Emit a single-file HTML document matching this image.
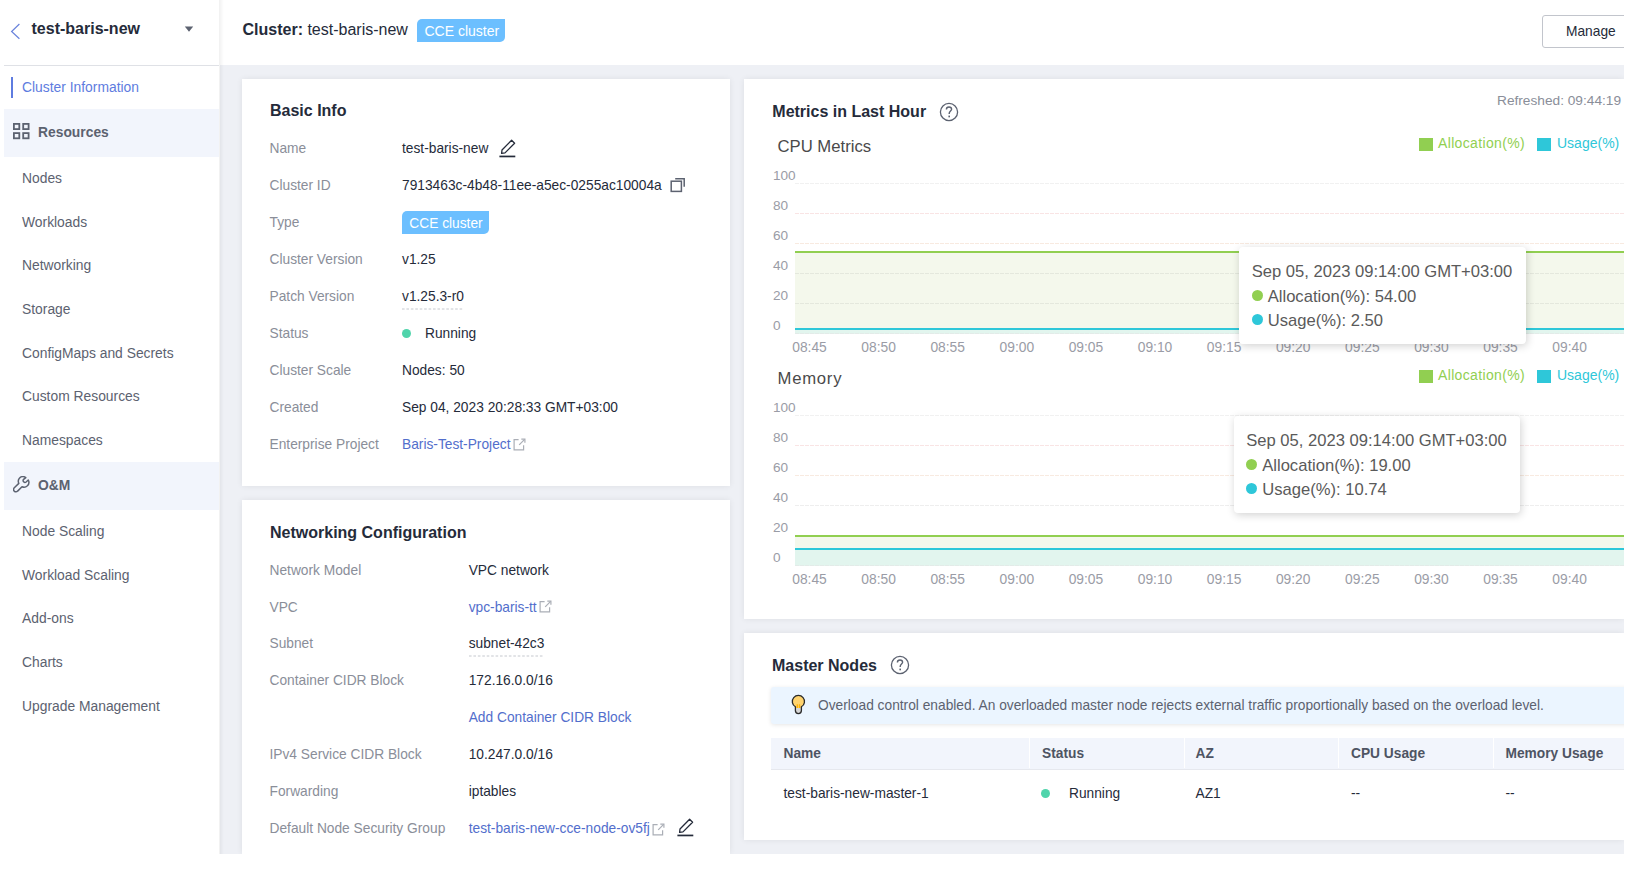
<!DOCTYPE html>
<html><head><meta charset="utf-8"><title>Cluster Information</title>
<style>
html,body{margin:0;padding:0;background:#fff;}
body{width:1640px;height:869px;position:relative;overflow:hidden;font-family:"Liberation Sans",sans-serif;}
.t{position:absolute;white-space:nowrap;line-height:20px;}
.r{position:absolute;}
#clip{position:absolute;left:0;top:0;width:1624px;height:854px;overflow:hidden;}
</style></head><body><div id="clip">
<div class="r" style="left:220px;top:65px;width:1404px;height:789px;background:#eef0f5"></div>
<div class="r" style="left:219px;top:0px;width:5px;height:854px;background:linear-gradient(to right, rgba(0,0,0,0.06), rgba(0,0,0,0))"></div>
<svg class="r" style="left:10px;top:22px;" width="12" height="18" viewBox="0 0 12 18"><path d="M9.4 2 L1.6 9.5 L9.4 16.8" fill="none" stroke="#6b84dc" stroke-width="1.2"/></svg>
<div class="t " style="left:31.50px;top:18.75px;font-size:16px;color:#252b3a;font-weight:700;">test-baris-new</div>
<svg class="r" style="left:184.2px;top:25.5px;" width="10" height="6" viewBox="0 0 10 6"><path d="M0.8 0.5 L9.2 0.5 L5 5.8 Z" fill="#5c6270"/></svg>
<div class="r" style="left:4px;top:65px;width:215px;height:1px;background:#dfe1e6"></div>
<div class="r" style="left:11px;top:77px;width:2px;height:21px;background:#5e7ce0"></div>
<div class="t " style="left:22.00px;top:77.10px;font-size:13.85px;color:#5e7ce0;">Cluster Information</div>
<div class="r" style="left:4px;top:109px;width:215px;height:48px;background:#f2f5fc"></div>
<svg class="r" style="left:12px;top:122px;" width="19" height="18" viewBox="0 0 19 18"><g fill="none" stroke="#5c6270" stroke-width="1.8"><rect x="1.9" y="1.9" width="5.4" height="5.2"/><rect x="11.2" y="1.9" width="5.4" height="5.2"/><rect x="1.9" y="11.1" width="5.4" height="5.2"/><rect x="11.2" y="11.1" width="5.4" height="5.2"/></g></svg>
<div class="t " style="left:38.00px;top:121.60px;font-size:13.85px;color:#5c6270;font-weight:700;">Resources</div>
<div class="t " style="left:22.00px;top:168.20px;font-size:13.85px;color:#5c6270;">Nodes</div>
<div class="t " style="left:22.00px;top:211.82px;font-size:13.85px;color:#5c6270;">Workloads</div>
<div class="t " style="left:22.00px;top:255.44px;font-size:13.85px;color:#5c6270;">Networking</div>
<div class="t " style="left:22.00px;top:299.06px;font-size:13.85px;color:#5c6270;">Storage</div>
<div class="t " style="left:22.00px;top:342.68px;font-size:13.85px;color:#5c6270;">ConfigMaps and Secrets</div>
<div class="t " style="left:22.00px;top:386.30px;font-size:13.85px;color:#5c6270;">Custom Resources</div>
<div class="t " style="left:22.00px;top:429.92px;font-size:13.85px;color:#5c6270;">Namespaces</div>
<div class="r" style="left:4px;top:462px;width:215px;height:48px;background:#f2f5fc"></div>
<svg class="r" style="left:13px;top:475.5px;" width="17" height="17" viewBox="0 0 17 17"><path d="M12.8 1.6 C11.2 0.2 8.2 0.2 6.6 2 C5.2 3.5 5 5.6 5.8 7.4 L1.3 11.8 C0.3 12.8 0.3 14.3 1.3 15.2 C2.2 16.1 3.7 16.1 4.6 15.1 L9 10.7 C10.8 11.5 12.9 11.2 14.4 9.8 C15.9 8.3 16.3 6 15.3 4 L13.1 6 C12.4 6.6 11.3 6.5 10.6 5.8 C9.9 5.1 9.9 4 10.6 3.4 Z" fill="none" stroke="#5c6270" stroke-width="1.5" stroke-linejoin="round"/></svg>
<div class="t " style="left:38.00px;top:474.50px;font-size:13.85px;color:#5c6270;font-weight:700;">O&amp;M</div>
<div class="t " style="left:22.00px;top:521.20px;font-size:13.85px;color:#5c6270;">Node Scaling</div>
<div class="t " style="left:22.00px;top:564.82px;font-size:13.85px;color:#5c6270;">Workload Scaling</div>
<div class="t " style="left:22.00px;top:608.44px;font-size:13.85px;color:#5c6270;">Add-ons</div>
<div class="t " style="left:22.00px;top:652.06px;font-size:13.85px;color:#5c6270;">Charts</div>
<div class="t " style="left:22.00px;top:695.68px;font-size:13.85px;color:#5c6270;">Upgrade Management</div>
<div class="t " style="left:242.50px;top:20.45px;font-size:16px;color:#252b3a;"><b>Cluster:</b> test-baris-new</div>
<div class="r" style="left:417px;top:19px;width:88px;height:23px;background:#6cbfff;border-radius:5px 0 5px 0"></div>
<div class="t " style="left:424.50px;top:21.15px;font-size:14px;color:#fff;">CCE cluster</div>
<div class="r" style="left:1542px;top:15px;width:110px;height:33px;box-sizing:border-box;border:1.5px solid #c2c5cc;border-radius:3px;background:#fff"></div>
<div class="t " style="left:1566.00px;top:22.13px;font-size:13.75px;color:#252b3a;">Manage</div>
<div class="r" style="left:242px;top:79px;width:488px;height:407px;background:#fff;box-shadow:0 0 6px rgba(0,0,0,0.075)"></div>
<div class="t " style="left:270.00px;top:101.35px;font-size:16px;color:#252b3a;font-weight:700;">Basic Info</div>
<div class="t " style="left:269.50px;top:138.63px;font-size:13.75px;color:#8a8e99;">Name</div>
<div class="t " style="left:269.50px;top:175.63px;font-size:13.75px;color:#8a8e99;">Cluster ID</div>
<div class="t " style="left:269.50px;top:212.63px;font-size:13.75px;color:#8a8e99;">Type</div>
<div class="t " style="left:269.50px;top:249.63px;font-size:13.75px;color:#8a8e99;">Cluster Version</div>
<div class="t " style="left:269.50px;top:286.63px;font-size:13.75px;color:#8a8e99;">Patch Version</div>
<div class="t " style="left:269.50px;top:323.63px;font-size:13.75px;color:#8a8e99;">Status</div>
<div class="t " style="left:269.50px;top:360.63px;font-size:13.75px;color:#8a8e99;">Cluster Scale</div>
<div class="t " style="left:269.50px;top:397.63px;font-size:13.75px;color:#8a8e99;">Created</div>
<div class="t " style="left:269.50px;top:434.63px;font-size:13.75px;color:#8a8e99;">Enterprise Project</div>
<div class="t " style="left:402.00px;top:138.63px;font-size:13.75px;color:#252b3a;">test-baris-new</div>
<svg class="r" style="left:498.5px;top:138.5px;" width="17" height="19" viewBox="0 0 17 19"><path d="M2.6 14.4 L3.0 11.0 L12.6 1.3 L15.6 4.3 L6.0 13.9 Z" fill="none" stroke="#252b3a" stroke-width="1.3" stroke-linejoin="round"/><rect x="0.4" y="16.6" width="15.9" height="1.7" fill="#252b3a"/></svg>
<div class="t " style="left:402.00px;top:175.63px;font-size:13.75px;color:#252b3a;">7913463c-4b48-11ee-a5ec-0255ac10004a</div>
<svg class="r" style="left:670px;top:177px;" width="16" height="16" viewBox="0 0 16 16"><g fill="none" stroke="#5c6270" stroke-width="1.5"><rect x="1.2" y="4.2" width="10.2" height="10.2"/><path d="M5.2 1.7 H14.2 V9.8"/></g></svg>
<div class="r" style="left:402px;top:211px;width:87px;height:23px;background:#6cbfff;border-radius:5px 0 5px 0"></div>
<div class="t " style="left:409.30px;top:213.53px;font-size:13.75px;color:#fff;">CCE cluster</div>
<div class="t " style="left:402.00px;top:249.63px;font-size:13.75px;color:#252b3a;">v1.25</div>
<div class="t " style="left:402.00px;top:286.83px;font-size:13.75px;color:#252b3a;">v1.25.3-r0</div>
<svg class="r" style="left:402px;top:307.5px;" width="62" height="2" viewBox="0 0 62 2"><line x1="0" y1="1" x2="62" y2="1" stroke="#c5c8ce" stroke-width="1" stroke-dasharray="2.6 1.83"/></svg>
<div class="r" style="left:401.8px;top:328.8px;width:9.4px;height:9.4px;background:#50d4ab;border-radius:50%"></div>
<div class="t " style="left:425.00px;top:324.13px;font-size:13.75px;color:#252b3a;">Running</div>
<div class="t " style="left:402.00px;top:360.63px;font-size:13.75px;color:#252b3a;">Nodes: 50</div>
<div class="t " style="left:402.00px;top:397.83px;font-size:13.75px;color:#252b3a;">Sep 04, 2023 20:28:33 GMT+03:00</div>
<div class="t " style="left:402.00px;top:434.73px;font-size:13.75px;color:#526ecc;">Baris-Test-Project</div>
<svg class="r" style="left:513px;top:438px;" width="13" height="13" viewBox="0 0 13 13"><g fill="none" stroke="#aaaeb6" stroke-width="1.2"><path d="M5.6 1.6 H1.1 V11.9 H10.6 V7.2"/><path d="M6.2 6.8 L11.6 1.4"/><path d="M8.3 1.1 H11.9 V4.7"/></g></svg>
<div class="r" style="left:242px;top:500px;width:488px;height:354px;background:#fff;box-shadow:0 0 6px rgba(0,0,0,0.075)"></div>
<div class="t " style="left:270.00px;top:523.25px;font-size:16px;color:#252b3a;font-weight:700;">Networking Configuration</div>
<div class="t " style="left:269.50px;top:560.63px;font-size:13.75px;color:#8a8e99;">Network Model</div>
<div class="t " style="left:269.50px;top:597.53px;font-size:13.75px;color:#8a8e99;">VPC</div>
<div class="t " style="left:269.50px;top:634.43px;font-size:13.75px;color:#8a8e99;">Subnet</div>
<div class="t " style="left:269.50px;top:671.33px;font-size:13.75px;color:#8a8e99;">Container CIDR Block</div>
<div class="t " style="left:269.50px;top:745.13px;font-size:13.75px;color:#8a8e99;">IPv4 Service CIDR Block</div>
<div class="t " style="left:269.50px;top:782.03px;font-size:13.75px;color:#8a8e99;">Forwarding</div>
<div class="t " style="left:269.50px;top:818.93px;font-size:13.75px;color:#8a8e99;">Default Node Security Group</div>
<div class="t " style="left:468.70px;top:560.63px;font-size:13.75px;color:#252b3a;">VPC network</div>
<div class="t " style="left:468.70px;top:597.53px;font-size:13.75px;color:#526ecc;">vpc-baris-tt</div>
<svg class="r" style="left:538.5px;top:600px;" width="13" height="13" viewBox="0 0 13 13"><g fill="none" stroke="#aaaeb6" stroke-width="1.2"><path d="M5.6 1.6 H1.1 V11.9 H10.6 V7.2"/><path d="M6.2 6.8 L11.6 1.4"/><path d="M8.3 1.1 H11.9 V4.7"/></g></svg>
<div class="t " style="left:468.70px;top:634.43px;font-size:13.75px;color:#252b3a;">subnet-42c3</div>
<svg class="r" style="left:469px;top:654.5px;" width="75" height="2" viewBox="0 0 75 2"><line x1="0" y1="1" x2="75" y2="1" stroke="#c5c8ce" stroke-width="1" stroke-dasharray="2.6 1.83"/></svg>
<div class="t " style="left:468.70px;top:671.33px;font-size:13.75px;color:#252b3a;">172.16.0.0/16</div>
<div class="t " style="left:468.70px;top:708.23px;font-size:13.75px;color:#526ecc;">Add Container CIDR Block</div>
<div class="t " style="left:468.70px;top:745.13px;font-size:13.75px;color:#252b3a;">10.247.0.0/16</div>
<div class="t " style="left:468.70px;top:782.03px;font-size:13.75px;color:#252b3a;">iptables</div>
<div class="t " style="left:468.70px;top:819.33px;font-size:13.75px;color:#526ecc;">test-baris-new-cce-node-ov5fj</div>
<svg class="r" style="left:651.5px;top:822.5px;" width="13" height="13" viewBox="0 0 13 13"><g fill="none" stroke="#aaaeb6" stroke-width="1.2"><path d="M5.6 1.6 H1.1 V11.9 H10.6 V7.2"/><path d="M6.2 6.8 L11.6 1.4"/><path d="M8.3 1.1 H11.9 V4.7"/></g></svg>
<svg class="r" style="left:676.5px;top:818px;" width="17" height="19" viewBox="0 0 17 19"><path d="M2.6 14.4 L3.0 11.0 L12.6 1.3 L15.6 4.3 L6.0 13.9 Z" fill="none" stroke="#252b3a" stroke-width="1.3" stroke-linejoin="round"/><rect x="0.4" y="16.6" width="15.9" height="1.7" fill="#252b3a"/></svg>
<div class="r" style="left:744px;top:79px;width:880px;height:540px;background:#fff;box-shadow:0 0 6px rgba(0,0,0,0.075)"></div>
<div class="t " style="left:772.30px;top:101.65px;font-size:16px;color:#252b3a;font-weight:700;">Metrics in Last Hour</div>
<svg class="r" style="left:939px;top:102px;" width="20" height="20" viewBox="0 0 20 20"><circle cx="10" cy="10" r="8.6" fill="none" stroke="#5c6270" stroke-width="1.3"/><path d="M7.4 7.6 C7.4 5.9 8.6 5 10 5 C11.5 5 12.6 6 12.6 7.3 C12.6 8.9 10.2 9.3 10.2 11.4 V12" fill="none" stroke="#5c6270" stroke-width="1.4"/><rect x="9.4" y="13.6" width="1.6" height="1.7" fill="#5c6270"/></svg>
<div class="t " style="left:1497.00px;top:91.45px;font-size:13.7px;color:#8a8e99;">Refreshed: 09:44:19</div>
<div class="t " style="left:777.50px;top:136.91px;font-size:16.7px;color:#4a4a4a;">CPU Metrics</div>
<div class="r" style="left:1418.5px;top:137.5px;width:14px;height:13.5px;background:#91cf51"></div>
<div class="t " style="left:1438.00px;top:133.15px;font-size:14px;color:#91cf51;letter-spacing:0.35px">Allocation(%)</div>
<div class="r" style="left:1537px;top:137.5px;width:14px;height:13.5px;background:#2ec7d9"></div>
<div class="t " style="left:1557.00px;top:133.15px;font-size:14px;color:#2ec7d9;">Usage(%)</div>
<div class="t " style="left:773.00px;top:165.78px;font-size:13.6px;color:#9a9ca6;">100</div>
<div class="t " style="left:773.00px;top:195.78px;font-size:13.6px;color:#9a9ca6;">80</div>
<div class="t " style="left:773.00px;top:225.78px;font-size:13.6px;color:#9a9ca6;">60</div>
<div class="t " style="left:773.00px;top:255.78px;font-size:13.6px;color:#9a9ca6;">40</div>
<div class="t " style="left:773.00px;top:285.78px;font-size:13.6px;color:#9a9ca6;">20</div>
<div class="t " style="left:773.00px;top:315.78px;font-size:13.6px;color:#9a9ca6;">0</div>
<div class="r" style="left:795px;top:251.1px;width:829px;height:82.9px;background:#f4f8ec"></div>
<div class="r" style="left:795px;top:327.8px;width:829px;height:6.199999999999989px;background:#e2f5ee"></div>
<div class="r" style="left:795px;top:183px;width:829px;height:1px;background:repeating-linear-gradient(to right,#f1f1f1 0 4px,transparent 4px 5px)"></div>
<div class="r" style="left:795px;top:213px;width:829px;height:1px;background:repeating-linear-gradient(to right,#f9e4e4 0 4px,transparent 4px 5px)"></div>
<div class="r" style="left:795px;top:243px;width:829px;height:1px;background:repeating-linear-gradient(to right,#f8eae0 0 4px,transparent 4px 5px)"></div>
<div class="r" style="left:795px;top:273px;width:829px;height:1px;background:repeating-linear-gradient(to right,#e4e8dd 0 4px,transparent 4px 5px)"></div>
<div class="r" style="left:795px;top:303px;width:829px;height:1px;background:repeating-linear-gradient(to right,#e4e8dd 0 4px,transparent 4px 5px)"></div>
<div class="r" style="left:795px;top:333px;width:829px;height:1px;background:repeating-linear-gradient(to right,#e3ebe8 0 4px,transparent 4px 5px)"></div>
<div class="r" style="left:795px;top:251.1px;width:829px;height:2.1px;background:#91cf51"></div>
<div class="r" style="left:795px;top:327.8px;width:829px;height:2.1px;background:#2ec7d9"></div>
<div class="t " style="left:792.00px;top:337.62px;font-size:13.8px;color:#9a9ca6;width:35px;text-align:center">08:45</div>
<div class="t " style="left:861.10px;top:337.62px;font-size:13.8px;color:#9a9ca6;width:35px;text-align:center">08:50</div>
<div class="t " style="left:930.20px;top:337.62px;font-size:13.8px;color:#9a9ca6;width:35px;text-align:center">08:55</div>
<div class="t " style="left:999.30px;top:337.62px;font-size:13.8px;color:#9a9ca6;width:35px;text-align:center">09:00</div>
<div class="t " style="left:1068.40px;top:337.62px;font-size:13.8px;color:#9a9ca6;width:35px;text-align:center">09:05</div>
<div class="t " style="left:1137.50px;top:337.62px;font-size:13.8px;color:#9a9ca6;width:35px;text-align:center">09:10</div>
<div class="t " style="left:1206.60px;top:337.62px;font-size:13.8px;color:#9a9ca6;width:35px;text-align:center">09:15</div>
<div class="t " style="left:1275.70px;top:337.62px;font-size:13.8px;color:#9a9ca6;width:35px;text-align:center">09:20</div>
<div class="t " style="left:1344.80px;top:337.62px;font-size:13.8px;color:#9a9ca6;width:35px;text-align:center">09:25</div>
<div class="t " style="left:1413.90px;top:337.62px;font-size:13.8px;color:#9a9ca6;width:35px;text-align:center">09:30</div>
<div class="t " style="left:1483.00px;top:337.62px;font-size:13.8px;color:#9a9ca6;width:35px;text-align:center">09:35</div>
<div class="t " style="left:1552.10px;top:337.62px;font-size:13.8px;color:#9a9ca6;width:35px;text-align:center">09:40</div>
<div class="t " style="left:777.50px;top:368.91px;font-size:16.7px;color:#4a4a4a;letter-spacing:0.75px">Memory</div>
<div class="r" style="left:1418.5px;top:369.5px;width:14px;height:13.5px;background:#91cf51"></div>
<div class="t " style="left:1438.00px;top:365.15px;font-size:14px;color:#91cf51;letter-spacing:0.35px">Allocation(%)</div>
<div class="r" style="left:1537px;top:369.5px;width:14px;height:13.5px;background:#2ec7d9"></div>
<div class="t " style="left:1557.00px;top:365.15px;font-size:14px;color:#2ec7d9;">Usage(%)</div>
<div class="t " style="left:773.00px;top:397.78px;font-size:13.6px;color:#9a9ca6;">100</div>
<div class="t " style="left:773.00px;top:427.78px;font-size:13.6px;color:#9a9ca6;">80</div>
<div class="t " style="left:773.00px;top:457.78px;font-size:13.6px;color:#9a9ca6;">60</div>
<div class="t " style="left:773.00px;top:487.78px;font-size:13.6px;color:#9a9ca6;">40</div>
<div class="t " style="left:773.00px;top:517.78px;font-size:13.6px;color:#9a9ca6;">20</div>
<div class="t " style="left:773.00px;top:547.78px;font-size:13.6px;color:#9a9ca6;">0</div>
<div class="r" style="left:795px;top:535.2px;width:829px;height:30.799999999999955px;background:#f4f8ec"></div>
<div class="r" style="left:795px;top:547.7px;width:829px;height:18.299999999999955px;background:#e2f5ee"></div>
<div class="r" style="left:795px;top:415px;width:829px;height:1px;background:repeating-linear-gradient(to right,#f1f1f1 0 4px,transparent 4px 5px)"></div>
<div class="r" style="left:795px;top:445px;width:829px;height:1px;background:repeating-linear-gradient(to right,#f9e4e4 0 4px,transparent 4px 5px)"></div>
<div class="r" style="left:795px;top:475px;width:829px;height:1px;background:repeating-linear-gradient(to right,#f8eae0 0 4px,transparent 4px 5px)"></div>
<div class="r" style="left:795px;top:505px;width:829px;height:1px;background:repeating-linear-gradient(to right,#eeeeee 0 4px,transparent 4px 5px)"></div>
<div class="r" style="left:795px;top:535px;width:829px;height:1px;background:repeating-linear-gradient(to right,#eeeeee 0 4px,transparent 4px 5px)"></div>
<div class="r" style="left:795px;top:565px;width:829px;height:1px;background:repeating-linear-gradient(to right,#e3ebe8 0 4px,transparent 4px 5px)"></div>
<div class="r" style="left:795px;top:535.2px;width:829px;height:2.1px;background:#91cf51"></div>
<div class="r" style="left:795px;top:547.7px;width:829px;height:2.1px;background:#2ec7d9"></div>
<div class="t " style="left:792.00px;top:569.62px;font-size:13.8px;color:#9a9ca6;width:35px;text-align:center">08:45</div>
<div class="t " style="left:861.10px;top:569.62px;font-size:13.8px;color:#9a9ca6;width:35px;text-align:center">08:50</div>
<div class="t " style="left:930.20px;top:569.62px;font-size:13.8px;color:#9a9ca6;width:35px;text-align:center">08:55</div>
<div class="t " style="left:999.30px;top:569.62px;font-size:13.8px;color:#9a9ca6;width:35px;text-align:center">09:00</div>
<div class="t " style="left:1068.40px;top:569.62px;font-size:13.8px;color:#9a9ca6;width:35px;text-align:center">09:05</div>
<div class="t " style="left:1137.50px;top:569.62px;font-size:13.8px;color:#9a9ca6;width:35px;text-align:center">09:10</div>
<div class="t " style="left:1206.60px;top:569.62px;font-size:13.8px;color:#9a9ca6;width:35px;text-align:center">09:15</div>
<div class="t " style="left:1275.70px;top:569.62px;font-size:13.8px;color:#9a9ca6;width:35px;text-align:center">09:20</div>
<div class="t " style="left:1344.80px;top:569.62px;font-size:13.8px;color:#9a9ca6;width:35px;text-align:center">09:25</div>
<div class="t " style="left:1413.90px;top:569.62px;font-size:13.8px;color:#9a9ca6;width:35px;text-align:center">09:30</div>
<div class="t " style="left:1483.00px;top:569.62px;font-size:13.8px;color:#9a9ca6;width:35px;text-align:center">09:35</div>
<div class="t " style="left:1552.10px;top:569.62px;font-size:13.8px;color:#9a9ca6;width:35px;text-align:center">09:40</div>
<div class="r" style="left:1239px;top:247px;width:286.5px;height:96.5px;background:#fff;border-radius:4px;box-shadow:1px 2px 9px rgba(0,0,0,0.18)"></div>
<div class="t " style="left:1251.70px;top:262.44px;font-size:16.6px;color:#5a5a5a;">Sep 05, 2023 09:14:00 GMT+03:00</div>
<div class="r" style="left:1251.7px;top:290.2px;width:11px;height:11px;background:#91cf51;border-radius:50%"></div>
<div class="t " style="left:1267.70px;top:286.84px;font-size:16.6px;color:#5a5a5a;">Allocation(%): 54.00</div>
<div class="r" style="left:1251.7px;top:314.3px;width:11px;height:11px;background:#2ec7d9;border-radius:50%"></div>
<div class="t " style="left:1267.70px;top:310.54px;font-size:16.6px;color:#5a5a5a;">Usage(%): 2.50</div>
<div class="r" style="left:1233.5px;top:416px;width:286.5px;height:96.5px;background:#fff;border-radius:4px;box-shadow:1px 2px 9px rgba(0,0,0,0.18)"></div>
<div class="t " style="left:1246.20px;top:431.44px;font-size:16.6px;color:#5a5a5a;">Sep 05, 2023 09:14:00 GMT+03:00</div>
<div class="r" style="left:1246.2px;top:459.2px;width:11px;height:11px;background:#91cf51;border-radius:50%"></div>
<div class="t " style="left:1262.20px;top:455.84px;font-size:16.6px;color:#5a5a5a;">Allocation(%): 19.00</div>
<div class="r" style="left:1246.2px;top:483.3px;width:11px;height:11px;background:#2ec7d9;border-radius:50%"></div>
<div class="t " style="left:1262.20px;top:479.54px;font-size:16.6px;color:#5a5a5a;">Usage(%): 10.74</div>
<div class="r" style="left:744px;top:633px;width:880px;height:207px;background:#fff;box-shadow:0 0 6px rgba(0,0,0,0.075)"></div>
<div class="t " style="left:772.00px;top:656.05px;font-size:16px;color:#252b3a;font-weight:700;">Master Nodes</div>
<svg class="r" style="left:890px;top:655px;" width="20" height="20" viewBox="0 0 20 20"><circle cx="10" cy="10" r="8.6" fill="none" stroke="#5c6270" stroke-width="1.3"/><path d="M7.4 7.6 C7.4 5.9 8.6 5 10 5 C11.5 5 12.6 6 12.6 7.3 C12.6 8.9 10.2 9.3 10.2 11.4 V12" fill="none" stroke="#5c6270" stroke-width="1.4"/><rect x="9.4" y="13.6" width="1.6" height="1.7" fill="#5c6270"/></svg>
<div class="r" style="left:771px;top:686.5px;width:880px;height:37.5px;background:#ebf5ff;border-radius:3px;box-shadow:0 1px 4px rgba(0,0,0,0.1)"></div>
<svg class="r" style="left:790px;top:693px;" width="17" height="22" viewBox="0 0 17 22"><path d="M5.4 13.8 A6.1 6.1 0 1 1 11.4 13.8 L11.4 17.6 A3 3 0 0 1 5.4 17.6 Z" fill="#ffd36e"/><rect x="5.6" y="15" width="5.6" height="5.2" fill="#d6d6d6"/><path d="M7.3 11.3 V15 M9.5 11.3 V15" stroke="#ffb300" stroke-width="1.3"/><path d="M5.4 13.8 A6.1 6.1 0 1 1 11.4 13.8 L11.4 17.6 A3 3 0 0 1 5.4 17.6 Z" fill="none" stroke="#2b2b2b" stroke-width="1.3"/></svg>
<div class="t " style="left:818.00px;top:696.03px;font-size:13.75px;color:#5c6270;">Overload control enabled. An overloaded master node rejects external traffic proportionally based on the overload level.</div>
<div class="r" style="left:771px;top:737.5px;width:880px;height:32px;background:#f2f5fc;border-bottom:1.5px solid #e6e8ee;box-sizing:border-box"></div>
<div class="r" style="left:1029px;top:737.5px;width:1px;height:30.5px;background:#fff"></div>
<div class="r" style="left:1184px;top:737.5px;width:1px;height:30.5px;background:#fff"></div>
<div class="r" style="left:1338px;top:737.5px;width:1px;height:30.5px;background:#fff"></div>
<div class="r" style="left:1493px;top:737.5px;width:1px;height:30.5px;background:#fff"></div>
<div class="t " style="left:783.50px;top:743.83px;font-size:13.75px;color:#4e5463;font-weight:700;">Name</div>
<div class="t " style="left:1042.00px;top:743.83px;font-size:13.75px;color:#4e5463;font-weight:700;">Status</div>
<div class="t " style="left:1195.50px;top:743.83px;font-size:13.75px;color:#4e5463;font-weight:700;">AZ</div>
<div class="t " style="left:1351.00px;top:743.83px;font-size:13.75px;color:#4e5463;font-weight:700;">CPU Usage</div>
<div class="t " style="left:1505.50px;top:743.83px;font-size:13.75px;color:#4e5463;font-weight:700;">Memory Usage</div>
<div class="t " style="left:783.50px;top:784.03px;font-size:13.75px;color:#252b3a;">test-baris-new-master-1</div>
<div class="r" style="left:1041px;top:789px;width:9.4px;height:9.4px;background:#50d4ab;border-radius:50%"></div>
<div class="t " style="left:1069.00px;top:784.03px;font-size:13.75px;color:#252b3a;">Running</div>
<div class="t " style="left:1195.50px;top:784.03px;font-size:13.75px;color:#252b3a;">AZ1</div>
<div class="t " style="left:1351.00px;top:784.03px;font-size:13.75px;color:#252b3a;">--</div>
<div class="t " style="left:1505.50px;top:784.03px;font-size:13.75px;color:#252b3a;">--</div>
</div></body></html>
